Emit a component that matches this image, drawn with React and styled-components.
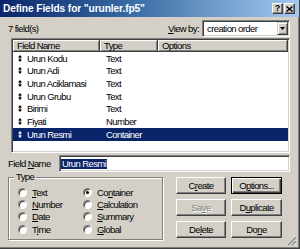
import React from 'react';
import styled, { createGlobalStyle } from 'styled-components';

const GlobalStyle = createGlobalStyle`
  html, body {
    margin: 0;
    padding: 0;
    background: #d4d0c8;
  }
  body {
    font-family: "Liberation Sans", Arial, sans-serif;
    font-size: 9.5px;
    letter-spacing: -0.6px;
    color: #000;
  }
`

const Window = styled.div`
  width: 300px;
  height: 249px;
  box-sizing: border-box;
  background: #d4d0c8;
  border-right: 1px solid #404040;
  border-bottom: 1px solid #404040;
  box-shadow: inset -1px -1px 0 #808080;
  display: flex;
  flex-direction: column;
  position: relative;
  overflow: hidden;
  white-space: nowrap;
`

const TitleBar = styled.div`
  height: 17px;
  flex: none;
  display: flex;
  align-items: center;
  padding: 0 4px 0 3px;
  background: linear-gradient(to right, #0a246a 0%, #3a6ea5 45%, #a6caf0 100%);
`

const Title = styled.div`
  flex: 1;
  color: #fff;
  font-weight: bold;
  font-size: 10.2px;
  letter-spacing: -0.1px;
`

const CaptionButtons = styled.div`
  display: flex;
  gap: 1px;
`

const CaptionButton = styled.div`
  width: 11px;
  height: 11px;
  box-sizing: border-box;
  background: #d4d0c8;
  border: 1px solid;
  border-color: #fff #404040 #404040 #fff;
  box-shadow: inset -1px -1px 0 #808080;
  display: flex;
  align-items: center;
  justify-content: center;
  font-weight: bold;
  font-size: 9px;
  letter-spacing: 0;
  line-height: 9px;
`

const Body = styled.div`
  flex: 1;
  display: flex;
  flex-direction: column;
  padding: 3px 9px 0 8px;
`

const TopRow = styled.div`
  height: 17px;
  display: flex;
  align-items: center;
  justify-content: space-between;
`

const ViewBy = styled.div`
  display: flex;
  align-items: center;
  gap: 3px;
`

const Sunken = styled.div`
  box-sizing: border-box;
  background: #fff;
  border: 1px solid;
  border-color: #808080 #fff #fff #808080;
  box-shadow: inset 1px 1px 0 #404040, inset -1px -1px 0 #d4d0c8;
  padding: 1px;
`

const Combo = styled(Sunken)`
  width: 88px;
  height: 17px;
  display: flex;
  align-items: center;
  justify-content: space-between;
  padding-left: 4px;
`

const DropArrow = styled.div`
  width: 11px;
  height: 13px;
  box-sizing: border-box;
  background: #d4d0c8;
  border: 1px solid;
  border-color: #d4d0c8 #404040 #404040 #d4d0c8;
  box-shadow: inset 1px 1px 0 #fff, inset -1px -1px 0 #808080;
  display: flex;
  align-items: center;
  justify-content: center;
`

const ListBox = styled(Sunken)`
  margin: 1px 0 0 3px;
  height: 115px;
  display: flex;
  flex-direction: column;
  overflow: hidden;
`

const Header = styled.div`
  display: flex;
  height: 12px;
  flex: none;
`

const HeaderCell = styled.div`
  box-sizing: border-box;
  width: ${p => (p.$w ? `${p.$w}px` : 'auto')};
  flex: ${p => (p.$w ? 'none' : '1')};
  background: #d4d0c8;
  border-right: 1px solid #404040;
  border-bottom: 1px solid #404040;
  box-shadow: inset 1px 1px 0 #fff, inset -1px -1px 0 #808080;
  padding-left: 4px;
  line-height: 11px;
`

const Row = styled.div`
  height: 12.67px;
  display: flex;
  align-items: center;
  background: ${p => (p.$selected ? '#0a246a' : 'transparent')};
  color: ${p => (p.$selected ? '#fff' : '#000')};
`

const NameCell = styled.div`
  width: 87px;
  display: flex;
  align-items: center;
  gap: 5px;
  padding-left: 5px;
  box-sizing: border-box;
`

const TypeCell = styled.div`
  padding-left: 6px;
`

const FieldRow = styled.div`
  margin-top: 2px;
  height: 17px;
  display: flex;
  align-items: center;
`

const FieldLabel = styled.div`
  width: 51px;
  flex: none;
`

const Edit = styled(Sunken)`
  flex: 1;
  height: 17px;
  display: flex;
  align-items: center;
`

const Selection = styled.span`
  background: #0a246a;
  color: #fff;
  padding: 0 1px;
  line-height: 10px;
`

const Bottom = styled.div`
  display: flex;
  align-items: flex-start;
`

const GroupBox = styled.fieldset`
  width: 155px;
  height: 68px;
  box-sizing: border-box;
  margin: 0;
  padding: 0 0 0 9px;
  border: 1px solid #808080;
  box-shadow: inset 1px 1px 0 #fff, 1px 1px 0 #fff;
`

const Legend = styled.legend`
  padding: 0 2px;
  margin-left: -4px;
  line-height: 10px;
  background: #d4d0c8;
`

const RadioGrid = styled.div`
  padding-top: 4px;
  display: grid;
  grid-template-columns: 65px 65px;
  grid-auto-rows: 12.33px;
`

const RadioOption = styled.label`
  display: flex;
  align-items: center;
  gap: 5px;
`

const RadioCircle = styled.span`
  width: 9px;
  height: 9px;
  box-sizing: border-box;
  border-radius: 50%;
  background: #fff;
  border: 1px solid;
  border-color: #808080 #fff #fff #808080;
  box-shadow: inset 1px 1px 0 #404040;
  display: flex;
  align-items: center;
  justify-content: center;
  &::after {
    content: "";
    width: 3px;
    height: 3px;
    border-radius: 50%;
    background: ${p => (p.$checked ? '#000' : 'transparent')};
  }
`

const ButtonGrid = styled.div`
  margin: 5px 0 0 13px;
  display: grid;
  grid-template-columns: 50px 51px;
  grid-auto-rows: 17px;
  gap: 5px;
`

const Button = styled.div`
  box-sizing: border-box;
  background: #d4d0c8;
  border: 1px solid;
  border-color: ${p => (p.$default ? '#000' : '#fff #404040 #404040 #fff')};
  box-shadow: ${p =>
    p.$default
      ? 'inset 1px 1px 0 #fff, inset -1px -1px 0 #404040, inset -2px -2px 0 #808080'
      : 'inset -1px -1px 0 #808080'};
  display: flex;
  align-items: center;
  justify-content: center;
  color: ${p => (p.$disabled ? '#808080' : '#000')};
  text-shadow: ${p => (p.$disabled ? '1px 1px 0 #fff' : 'none')};
`

const Grip = styled.svg`
  position: absolute;
  right: 2px;
  bottom: 2px;
`

const Key = styled.span`
  text-decoration: underline;
`

const Bullet = ({ color }) => (
  <svg width="4" height="7" viewBox="0 0 4 7">
    <path d="M2 0 L4 2.5 L0 2.5 Z M1.5 2.5 H2.5 V4.5 H1.5 Z M0 4.5 L4 4.5 L2 7 Z" fill={color} />
  </svg>
)

const fields = [
  ['Urun Kodu', 'Text'],
  ['Urun Adi', 'Text'],
  ['Urun Aciklamasi', 'Text'],
  ['Urun Grubu', 'Text'],
  ['Birimi', 'Text'],
  ['Fiyati', 'Number'],
  ['Urun Resmi', 'Container'],
]

const typeLabels = [
  { label: <><Key>T</Key>ext</> },
  { label: <>Co<Key>n</Key>tainer</>, checked: true },
  { label: <><Key>N</Key>umber</> },
  { label: <><Key>C</Key>alculation</> },
  { label: <><Key>D</Key>ate</> },
  { label: <><Key>S</Key>ummary</> },
  { label: <>T<Key>i</Key>me</> },
  { label: <><Key>G</Key>lobal</> },
]

export default function App() {
  return (
    <Window>
      <GlobalStyle />
      <TitleBar>
        <Title>Define Fields for "urunler.fp5"</Title>
        <CaptionButtons>
          <CaptionButton>?</CaptionButton>
          <CaptionButton>
            <svg width="7" height="6" viewBox="0 0 7 6">
              <path d="M0.5 0.5 L6.5 5.5 M6.5 0.5 L0.5 5.5" stroke="#000" strokeWidth="1.4" />
            </svg>
          </CaptionButton>
        </CaptionButtons>
      </TitleBar>
      <Body>
        <TopRow>
          <span>7 field(s)</span>
          <ViewBy>
            <span><Key>V</Key>iew by:</span>
            <Combo>
              <span>creation order</span>
              <DropArrow>
                <svg width="5" height="3" viewBox="0 0 5 3">
                  <path d="M0 0 H5 L2.5 3 Z" fill="#000" />
                </svg>
              </DropArrow>
            </Combo>
          </ViewBy>
        </TopRow>
        <ListBox>
          <Header>
            <HeaderCell $w={87}>Field Name</HeaderCell>
            <HeaderCell $w={58}>Type</HeaderCell>
            <HeaderCell>Options</HeaderCell>
          </Header>
          {fields.map(([name, type], i) => {
            const selected = i === fields.length - 1
            return (
              <Row key={name} $selected={selected}>
                <NameCell>
                  <Bullet color={selected ? '#fff' : '#000'} />
                  <span>{name}</span>
                </NameCell>
                <TypeCell>{type}</TypeCell>
              </Row>
            )
          })}
        </ListBox>
        <FieldRow>
          <FieldLabel>Field <Key>N</Key>ame</FieldLabel>
          <Edit>
            <Selection>Urun Resmi</Selection>
          </Edit>
        </FieldRow>
        <Bottom>
          <GroupBox>
            <Legend>Type</Legend>
            <RadioGrid>
              {typeLabels.map((t, i) => (
                <RadioOption key={i}>
                  <RadioCircle $checked={t.checked} />
                  <span>{t.label}</span>
                </RadioOption>
              ))}
            </RadioGrid>
          </GroupBox>
          <ButtonGrid>
            <Button>C<Key>r</Key>eate</Button>
            <Button $default>O<Key>p</Key>tions...</Button>
            <Button $disabled>Sa<Key>v</Key>e</Button>
            <Button>D<Key>u</Key>plicate</Button>
            <Button>De<Key>l</Key>ete</Button>
            <Button>Do<Key>n</Key>e</Button>
          </ButtonGrid>
        </Bottom>
      </Body>
      <Grip width="11" height="11" viewBox="0 0 11 11">
        <path d="M10 1 L1 10 M10 5 L5 10 M10 9 L9 10" stroke="#fff" strokeWidth="1" />
        <path d="M10 2 L2 10 M10 6 L6 10" stroke="#808080" strokeWidth="1.2" />
      </Grip>
    </Window>
  )
}
